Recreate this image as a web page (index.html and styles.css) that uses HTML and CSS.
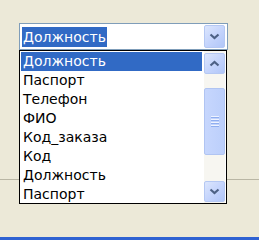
FILE: index.html
```html
<!DOCTYPE html>
<html>
<head>
<meta charset="utf-8">
<link rel="stylesheet" href="styles.css">
</head>
<body>
<div class="stage">
  <div class="combo">
    <div class="combo-field"><span class="combo-sel">Должность</span></div>
    <div class="xp-btn combo-btn">
      <svg width="11" height="7" viewBox="0 0 11 7"><path d="M1.5 1.5 L5.5 5 L9.5 1.5" fill="none" stroke="#4d6185" stroke-width="2.2"/></svg>
    </div>
  </div>
  <div class="list">
    <ul class="items">
      <li class="item sel">Должность</li>
      <li class="item">Паспорт</li>
      <li class="item">Телефон</li>
      <li class="item">ФИО</li>
      <li class="item">Код_заказа</li>
      <li class="item">Код</li>
      <li class="item">Должность</li>
      <li class="item">Паспорт</li>
    </ul>
    <div class="sbar">
      <div class="xp-btn sb-btn">
        <svg width="11" height="7" viewBox="0 0 11 7"><path d="M1.5 5.5 L5.5 2 L9.5 5.5" fill="none" stroke="#4d6185" stroke-width="2.2"/></svg>
      </div>
      <div class="track">
        <div class="thumb">
          <div class="grip"><i></i><i></i><i></i><i></i></div>
        </div>
      </div>
      <div class="xp-btn sb-btn">
        <svg width="11" height="7" viewBox="0 0 11 7"><path d="M1.5 1.5 L5.5 5 L9.5 1.5" fill="none" stroke="#4d6185" stroke-width="2.2"/></svg>
      </div>
    </div>
  </div>
</div>
</body>
</html>
```
FILE: styles.css
```css
html, body {
  margin: 0;
  padding: 0;
}
body {
  width: 259px;
  height: 240px;
  overflow: hidden;
  font-family: "DejaVu Sans", Tahoma, sans-serif;
  font-size: 14px;
  background-color: #ece9d8;
  background-image:
    linear-gradient(#2f62d2, #2f62d2),
    linear-gradient(#b9b6a4, #b9b6a4),
    linear-gradient(#cfccba, #cfccba);
  background-repeat: no-repeat;
  background-size: 259px 3px, 259px 1px, 1px 129px;
  background-position: 0 237px, 0 179px, 226px 51px;
}
.stage {
  padding: 23px 0 0 19px;
}
.combo {
  width: 205px;
  height: 25px;
  border: 1px solid #7f9db9;
  background: #fff;
  display: flex;
  align-items: center;
  justify-content: space-between;
  padding-right: 2px;
  box-sizing: content-box;
}
.combo-field {
  padding-left: 2px;
  display: flex;
  align-items: center;
}
.combo-sel {
  background: #316ac5;
  color: #fff;
  line-height: 20px;
  padding: 0 1px;
}
.xp-btn {
  box-sizing: border-box;
  border: 1px solid #b5c8f3;
  border-radius: 2px;
  background: linear-gradient(135deg, #dce6fd 0%, #c3d3fc 55%, #b1c6f8 100%);
  display: flex;
  align-items: center;
  justify-content: center;
}
.combo-btn {
  width: 21px;
  height: 23px;
}
.list {
  width: 205px;
  height: 152px;
  border: 1px solid #000;
  background: #fff;
  display: flex;
  justify-content: space-between;
  padding-right: 1px;
  box-sizing: content-box;
}
.items {
  list-style: none;
  margin: 0;
  padding: 1px 0 0 1px;
  width: 181px;
}
.item {
  height: 19px;
  line-height: 19px;
  padding-left: 2px;
  color: #000;
  white-space: nowrap;
}
.item.sel {
  background: #316ac5;
  color: #fff;
}
.sbar {
  width: 21px;
  padding-top: 2px;
  padding-bottom: 1px;
  display: flex;
  flex-direction: column;
  background: #f7f6f1;
}
.sb-btn {
  width: 21px;
  height: 21px;
  flex: none;
}
.track {
  flex: 1;
  padding: 14px 0 26px;
  display: flex;
}
.thumb {
  flex: 1;
  box-sizing: border-box;
  border: 1px solid #b0c4f2;
  border-radius: 2px;
  background: linear-gradient(90deg, #c6d6fd, #bccffb);
  display: flex;
  align-items: center;
  justify-content: center;
}
.grip {
  display: flex;
  flex-direction: column;
  gap: 1px;
}
.grip i {
  display: block;
  width: 8px;
  height: 1px;
  background: #eef3ff;
  border-bottom: 1px solid #8faef0;
}
```
